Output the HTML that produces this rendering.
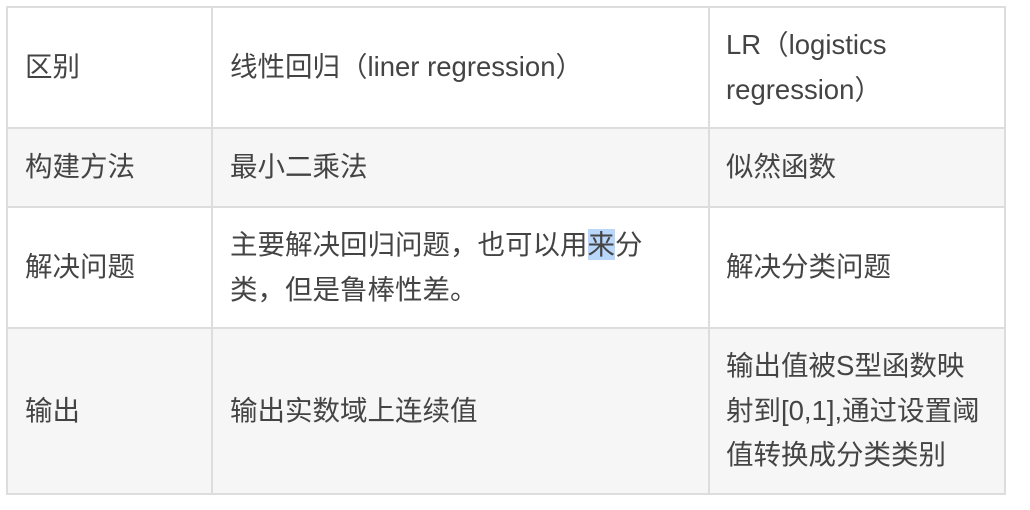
<!DOCTYPE html>
<html><head><meta charset="utf-8"><style>
body{margin:0;width:1030px;height:510px;background:#fff;position:relative;overflow:hidden;font-family:"Liberation Sans","Noto Sans CJK SC",sans-serif;font-size:27.5px;color:#444;}
.bg{position:absolute;background:#f6f6f6;}
.h{position:absolute;height:2px;background:#ddd;left:6px;width:1000px;}
.v{position:absolute;width:2px;background:#ddd;top:6px;height:489px;}
.c{position:absolute;display:flex;align-items:center;line-height:44.5px;}
.sel{background:#b9d7fb;}
</style></head><body>
<div class="bg" style="left:6px;top:128px;width:1000px;height:80px"></div>
<div class="bg" style="left:6px;top:328px;width:1000px;height:166px"></div>
<div class="h" style="top:6px"></div>
<div class="h" style="top:127px"></div>
<div class="h" style="top:206px"></div>
<div class="h" style="top:327px"></div>
<div class="h" style="top:493px"></div>
<div class="v" style="left:6px"></div>
<div class="v" style="left:211px"></div>
<div class="v" style="left:708px"></div>
<div class="v" style="left:1004px"></div>

<div class="c" style="left:25px;top:8px;height:119px"><div>区别</div></div>
<div class="c" style="left:230px;top:8px;height:119px"><div>线性回归（liner regression）</div></div>
<div class="c" style="left:726px;top:8px;height:119px;width:275px"><div>LR（logistics<br>regression）</div></div>

<div class="c" style="left:25px;top:129px;height:77px"><div>构建方法</div></div>
<div class="c" style="left:230px;top:129px;height:77px"><div>最小二乘法</div></div>
<div class="c" style="left:726px;top:129px;height:77px"><div>似然函数</div></div>

<div class="c" style="left:25px;top:208px;height:119px"><div>解决问题</div></div>
<div class="c" style="left:230px;top:208px;height:119px;width:470px"><div>主要解决回归问题，也可以用<span class="sel">来</span>分<br>类，但是鲁棒性差。</div></div>
<div class="c" style="left:726px;top:208px;height:119px"><div>解决分类问题</div></div>

<div class="c" style="left:25px;top:329px;height:164px"><div>输出</div></div>
<div class="c" style="left:230px;top:329px;height:164px"><div>输出实数域上连续值</div></div>
<div class="c" style="left:726px;top:329px;height:164px;width:275px"><div>输出值被S型函数映<br>射到[0,1],通过设置阈<br>值转换成分类类别</div></div>
</body></html>
